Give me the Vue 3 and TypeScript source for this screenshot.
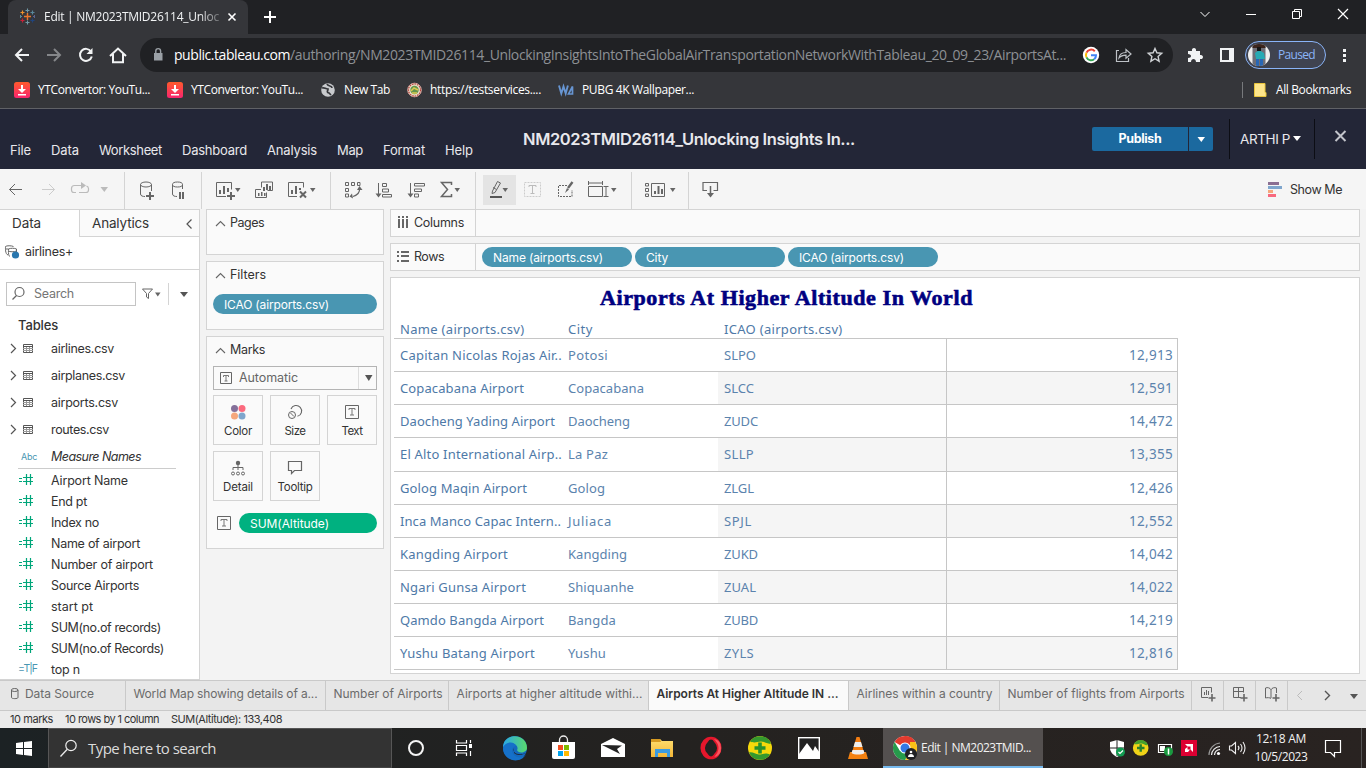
<script setup lang="ts">
import { h, type FunctionalComponent, type ObjectDirective } from 'vue'

/* Spreads a label over a given width by adjusting its letter spacing. */
const vFit: ObjectDirective<HTMLElement, number> = {
  mounted(el, binding) {
    const range = document.createRange()
    range.selectNodeContents(el)
    const natural = range.getBoundingClientRect().width
    const count = (el.textContent ?? '').length
    el.style.letterSpacing = `${(binding.value - natural) / count}px`
  },
}

const caret = (x: number, y: number, c = '#666') => `<path d="M${x + 0.5} ${y}h5.500l-2.750 4z" fill="${c}"/>`
const plus = (x: number, y: number) => `<path d="M${x - 4} ${y}h8M${x} ${y - 4}v8" stroke="#666" stroke-width="2" fill="none"/>`
const ln = (d: string, c = '#666', w = 1) => `<path d="${d}" stroke="${c}" stroke-width="${w}" fill="none"/>`
const fl = (d: string, c = '#666') => `<path d="${d}" fill="${c}"/>`

/* Icon artwork; every icon is drawn in window coordinates. */
const art: Record<string, string> = {
  tableau:
    ln('M27.5 13v7M24 16.5h7', '#e8762d', 1.4) + ln('M27.5 8.500v4M25.500 10.500h4M27.500 20.500v4M25.500 22.500h4', '#7199a6', 1.1) +
    ln('M22.500 10.500v4M20.500 12.500h4', '#eb912c', 1.2) + ln('M32.500 10.500v4M30.500 12.500h4', '#59879b', 1.2) +
    ln('M22.500 18.500v4M20.500 20.500h4', '#c72037', 1.2) + ln('M32.500 18.500v4M30.500 20.500h4', '#1f447e', 1.2) +
    ln('M34.500 15v3M33 16.500h2', '#5b6591', 1) + ln('M20.500 15v3M20 16.500h2', '#5c8a9b', 1),
  tabx: ln('M228.500 13.500l7 7M235.500 13.500l-7 7', '#fff', 1.6),
  newtab: ln('M264 17h12M270 11v12', '#fff', 2),
  wctl:
    ln('M1200.500 12l4.500 4.500 4.500-4.500', '#fff') + ln('M1246 14.500h10', '#fff') + ln('M1292.500 11.500h7v7h-7zM1294.500 11.500v-2h7v7h-2', '#fff') + ln('M1338 9l10 10M1348 9l-10 10', '#fff', 1.200),
  nav:
    ln('M29 55H16M22 49l-6 6 6 6', '#f1f3f4', 2) + ln('M47 55h13M54 49l6 6-6 6', '#85878a', 2) +
    ln('M91 51.500a6 6 0 1 0 .8 5', '#f1f3f4', 2) + fl('M92.500 48v6h-6z', '#f1f3f4') +
    ln('M110 56l8-7.500 8 7.500M113 54v8.200h10V54', '#f1f3f4', 2),
  lock: fl('M154 53h8.500v7.500H154z', '#9aa0a6') + ln('M155.800 53v-2a2.400 2.400 0 0 1 4.800 0v2', '#9aa0a6', 1.4),
  omni:
    '<circle cx="1091" cy="55" r="8.200" fill="#fff"/>' + ln('M1094.800 51.200a5 5 0 0 0-8.300 1.500', '#ea4335', 2) + ln('M1086.500 52.700a5 5 0 0 0 0 4.700', '#fbbc05', 2) + ln('M1086.500 57.400a5 5 0 0 0 7.600 1.800', '#34a853', 2) + ln('M1091 55.200h5a5 5 0 0 1-1.800 4', '#4285f4', 2) +
    ln('M1119 50.500h-2.500v11h12V58M1119 58c.5-4 3.500-5.500 7-5.500v-3l5 4.500-5 4.200v-3c-3 0-5 .3-7 2.800z', '#bdc1c6', 1.200) +
    ln('M1155.000 48.500l1.900 4.300 4.800.5-3.600 3.200 1 4.700-4.100-2.500-4.100 2.500 1-4.700-3.600-3.200 4.800-.5z', '#d0d3d6', 1.400),
  ext:
    fl('M1188 51h4c-1-4 5-4 4 0h4v4c4-1 4 5 0 4v3h-4c0-4-5-4-5 0h-3v-4c4 0 4-4 0-4z', '#f1f3f4') +
    '<rect x="1221" y="49" width="12" height="12" fill="none" stroke="#f1f3f4" stroke-width="2"/>' + fl('M1229 49h4v12h-4z', '#f1f3f4'),
  face:
    '<circle cx="1259" cy="55" r="11" fill="#efefef"/><clipPath id="fc"><circle cx="1259" cy="55" r="11"/></clipPath><g clip-path="url(#fc)"><path d="M1252.500 44h13v22h-13z" fill="#6d6e78"/><path d="M1252.500 44h13v4h-13z" fill="#3b241c"/><path d="M1255 53l4-3 5 3 1 6h-9z" fill="#27aab4"/><path d="M1257 47h4v4h-4z" fill="#151515"/><path d="M1256 59h3v8h-3zM1260 59h3v8h-3z" fill="#2867b5"/></g>',
  dots: fl('M1343 49h3v3h-3zM1343 54h3v3h-3zM1343 59h3v3h-3z', '#f1f3f4'),
  yt:
    '<defs><linearGradient id="yg" x2="0" y2="1"><stop stop-color="#ff5a2c"/><stop offset="1" stop-color="#f9256f"/></linearGradient></defs><rect x="14" y="82" width="16" height="16" rx="2.500" fill="url(#yg)"/>' +
    fl('M21 85h2v4h3l-4 4-4-4h3zM18 94h8v1.500h-8z', '#fff'),
  globe: '<circle cx="328" cy="90" r="6.800" fill="#c8cacd"/>' + ln('M322 88c3-1 3 1 6 1 0 2-2 3 1 4l2 2M327 84c1 3 5 1 5 4', '#35363a', 1.700),
  emblem: '<circle cx="414.500" cy="90" r="6.800" fill="#e9dcc6" stroke="#d8a9a2" stroke-width="1"/><circle cx="414.500" cy="90" r="6" fill="none" stroke="#b6443f" stroke-width="1.200" stroke-dasharray="1.500 1"/><circle cx="414.500" cy="90" r="4.200" fill="#62954c"/>' + ln('M411 91l3-3 4 2M412 93h5', '#dcc951', 1.500),
  wa: ln('M559 85.500l2.300 8 2.200-7 2.200 7 2.200-8', '#6795d2', 1.900) + ln('M568.500 94l4-7.500v7.500z', '#6795d2', 1.700),
  allb: ln('M1242.500 82v16', '#77797c') + '<path d="M1254.500 83.500h10.500v9h1v4h-11.500z" fill="#fde58b" stroke="#e8c43c"/>',
  hcaret: fl('M1197.500 137h7.500l-3.700 5z', '#fff'),
  ucaret: fl('M1293 137h8l-4 5z', '#fff'),
  hx: ln('M1335.500 133l10 10M1345.500 133l-10 10', '#c3c5cb', 2),
  g1:
    ln('M22 189.500H9.500M15 184l-5.500 5.500L15 195') + ln('M42 189.500h12.500M49 184l5.500 5.500L49 195', '#ccc') +
    ln('M76 192.500h-2a2.500 2.500 0 0 1-2.500-2.500v-1.500a3 3 0 0 1 3-3h9M79 192.500h7a2.500 2.500 0 0 0 2.500-2.500v-1.500a3 3 0 0 0-2-2.500', '#bbb', 1.200) + fl('M81 182l5 3.500-5 3.500z', '#bbb') + fl('M100.500 187h7.500l-3.700 5z', '#bbb'),
  g2:
    ln('M140.500 184.500v9.500c0 2 2.500 2.500 4.500 2.500M151.500 184.500v6.500') + '<ellipse cx="146" cy="184.500" rx="5.500" ry="2.500" fill="none" stroke="#666"/>' + plus(150, 196) +
    ln('M172.500 184.500v9.500c0 2 2.500 2.500 4.500 2.500M182.500 184.500v4.500') + '<ellipse cx="177.500" cy="184.500" rx="5" ry="2.500" fill="none" stroke="#666"/>' + fl('M179 192h2v7h-2zM182 192h2v7h-2z'),
  g3:
    ln('M226 196.500h-9.500v-14h15v7') + fl('M219 190h2v4h-2zM223 186h2v8h-2zM227 188h2v4h-2z') + plus(231, 196) + caret(234.500, 188) +
    ln('M261.500 187.500v-5.500h11v8.500h-5M261 189.500h-5.500v8h11v-5') + fl('M263 187h2v4h-2zM266 184h2v6h-2zM269 186h2v4h-2zM258 193h1.500v3H258zM261 192h1.500v4H261zM264 193h1.500v3H264z') +
    ln('M297 196.500h-8.500v-14h15v5') + fl('M291 190h2v4h-2zM295 186h2v8h-2zM299 188h2v2h-2z') + ln('M300 191.500l6 6M306 191.500l-6 6', '#666', 2) + caret(309.500, 188),
  g4:
    ln('M345.500 182.500h3v3h-3zM351.500 182.500h3v3h-3zM357.500 182.500h2.500v3h-2.500zM345.500 188.500h3v3h-3zM345.500 194h3v3h-3z') + ln('M359.500 188c.5 4-2 7-6.500 8.500', '#666', 1.200) + fl('M359.500 186l3 4h-5.500zM352 193.500l1 5-3.500-2z') +
    ln('M378.500 183v12M382.500 183.500h4v3h-4zM382.500 189h6v3h-6zM382.500 194.500h9v2.500h-9z') + fl('M375.500 193.500h6l-3 4z') +
    ln('M410.500 183v12M414.500 183.500h10v2.500h-10zM414.500 189h7v2.500h-7zM414.500 194h4v3h-4z') + fl('M407.500 193.500h6l-3 4z') +
    ln('M451.500 185v-2.500h-10l6 7-6 7h10V194', '#666', 1.500) + caret(454, 188),
  g5:
    '<path d="M483 175h33v30h-33z" fill="#e4e4e4"/>' + ln('M492.500 191l5-9.500 3 1.500-5.500 9.500-3 1zM493 187.500l3.500 2') + ln('M490 197h12', '#555', 2) + caret(502, 188) +
    '<rect x="524.500" y="182.500" width="16" height="14" fill="none" stroke="#ccc" stroke-dasharray="2 1"/>' + ln('M529 187v-1.500h7v1.500M532.500 186v7M530.500 193.500h4', '#bbb') +
    '<path d="M567 185.500h-8.500v11h13.500V190" fill="none" stroke="#666" stroke-dasharray="2 1"/>' + ln('M572.500 182l-4.500 6', '#666', 2.400) + fl('M567 188l2 1.500-4 3.500z') +
    ln('M588.500 181v4M602.500 181v4M588.500 183h14M588.500 186.500h14v10h-14zM603.500 186.500h5M603.500 196.500h5M606 187v9') + caret(610.500, 188),
  g6: ln('M645.500 183.500h3v2.500h-3zM645.500 188.500h3v3h-3zM645.500 194h3v2.500h-3zM651.500 183.500h13v13h-13z') + fl('M654 191h2v3h-2zM657.500 186h2v8h-2zM661 189h2v5h-2z') + caret(669.500, 188),
  g7: ln('M707 190.500h-4v-8h14.500v8h-4', '#666', 1.200) + ln('M710.500 186v8', '#666', 1.500) + fl('M707 193h7l-3.500 4.500z'),
  show: fl('M1268 182h11v3h-11z', '#8b6f92') + fl('M1268 186h14v3h-14z', '#7fa6cd') + fl('M1268 190h5v3h-5z', '#f5a77c') + fl('M1268 194h8v3h-8z', '#f8697e'),
  coll: ln('M191.500 219.500l-4.500 4.500 4.500 4.500', '#555', 1.200),
  ds: ln('M8 255c-3-1-2.500-7-2.500-8.500 1-1 6-1 8 0M9.500 256.500c-1.500-2-1-6-1-7.500 2-1 6-1 8 0v3M8.500 251c1 1 6 1 8 0M5.500 249h3') + '<circle cx="15.500" cy="255" r="3.600" fill="#2a77ae"/>',
  mag: '<circle cx="19.500" cy="292" r="4.500" fill="none" stroke="#666" stroke-width="1.200"/>' + ln('M16.500 295.500l-4 4', '#666', 1.300),
  filt: ln('M142.500 289h10l-4 4.500v5l-2-1.500v-3.500z') + caret(154.500, 292.500) + ln('M168.500 283v22', '#d4d4d4') + fl('M180 292h8l-4 5z', '#555'),
  tbl: ln('M11 344l4.500 4.500-4.500 4.500', '#555', 1.200) + ln('M23.500 344.500h9v8h-9zM23 346.500h10', '#555') + ln('M23 348.500h10M23 350.500h10M26.500 347v5M29.500 347v5', '#999', 1),
  hash: ln('M19 478.500h3M19 481.500h3M23 477.500h10M23 481.500h10M26.500 474v11M30.500 474v11', '#00a67a', 1.200),
  pgs: ln('M216 225l4.500-4.500 4.500 4.500', '#666', 1.100),
  tic: ln('M220.500 372.500h11v11h-11z', '#666') + ln('M223.500 377v-1.500h5v1.500M226 376v5M224.500 381h3', '#777'),
  dd: ln('M358.500 367v22', '#ddd') + fl('M365 375h7.500l-3.700 6z', '#555'),
  color: '<circle cx="234.500" cy="408.500" r="3.500" fill="#84709a"/><circle cx="242" cy="408.500" r="3.500" fill="#fb6a7e"/><circle cx="234.500" cy="416" r="3.500" fill="#f5a77c"/><circle cx="242" cy="416" r="3.500" fill="#7fa6cd"/>',
  size: ln('M291 409a5.500 5.500 0 1 1 6.500 7.300', '#666', 1.100) + '<circle cx="292" cy="415" r="3.500" fill="#fafafa" stroke="#666"/>' + ln('M290.500 413l3.500 3.500'),
  text: ln('M345.500 405.500h13v13h-13z') + ln('M349 410v-1.500h6v1.500M352 409v6M350 415h4', '#777'),
  detail: '<circle cx="238" cy="463" r="2.200" fill="#666"/>' + ln('M238 465v5M233 470v-2.500h10v2.500') + '<circle cx="233" cy="473.500" r="1.500" fill="none" stroke="#666"/><circle cx="238" cy="473.500" r="1.500" fill="none" stroke="#666"/><circle cx="243" cy="473.500" r="1.500" fill="none" stroke="#666"/>',
  tip: ln('M288.500 461.500h13v9h-7l-3 3v-3h-3z', '#666', 1.200),
  tsum: ln('M217.500 516.500h13v13h-13z') + ln('M221 521v-1.500h6v1.500M224 520v6M222 526h4', '#777'),
  cols: fl('M398 216h2v2h-2zM402 216h2v2h-2zM406 216h2v2h-2zM398 219h2v9h-2zM402 219h2v9h-2zM406 219h2v9h-2z'),
  rows: fl('M397 251h2v2h-2zM397 255h2v2h-2zM397 260h2v2h-2zM401 251h8v2h-8zM401 255h8v2h-8zM401 260h8v2h-8z'),
  dsrc: ln('M11.500 691v7.500c0 1.500 6.500 1.500 6.500 0V691') + '<ellipse cx="14.700" cy="691" rx="3.300" ry="1.500" fill="none" stroke="#666"/>',
  ns: ln('M1208 697.500h-6.500v-10h10v5') + fl('M1204 692h1v3h-1zM1206 690h1v5h-1zM1208 691h1v4h-1z') + ln('M1208.500 698h7M1212 694v7.500', '#666', 1.600),
  nd: ln('M1241 697.500h-7.500v-10h10v5M1238.500 687v10M1233 691.500h10') + ln('M1240.500 698h7M1244 694v7.500', '#666', 1.600),
  nst: ln('M1271 698.500c-1-1-4-1-5.500-.5v-10c2-1 4.500 0 5.500 1.500 1-1.500 3.500-2.500 5.500-1.500v5M1271 689v9') + ln('M1272.500 698h7M1276 694v7.500', '#666', 1.600),
  pag: ln('M1302 691l-4.500 4.500 4.500 4.500', '#bbb') + ln('M1325 691l4.500 4.500-4.500 4.500', '#555', 1.400) + fl('M1350 694h8l-4 5z', '#555'),
  win: fl('M16 743l7-1v6h-7zM24 742l8-1v7h-8zM16 749h7v6l-7-1zM24 749h8v7l-8-1z', '#fff'),
  wmag: '<circle cx="71" cy="745.500" r="5.200" fill="none" stroke="#eee" stroke-width="1.200"/>' + ln('M67 749.500l-6.500 7', '#eee', 1.300),
  apps:
    '<circle cx="416" cy="748" r="7" fill="none" stroke="#f4f4f4" stroke-width="2"/>' +
    ln('M456.500 740v3h10v-3M456.500 756v-3h10v3M456.500 745.500h10v5h-10zM470.500 740v3M470.500 751v5', '#fff', 1.200) + fl('M469 744h3v4h-3z', '#fff') +
    '<defs><linearGradient id="eg"><stop stop-color="#2aa8e8"/><stop offset="1" stop-color="#59d96b"/></linearGradient><linearGradient id="cg" x2="0" y2="1"><stop stop-color="#ffdf70"/><stop offset="1" stop-color="#f3b637"/></linearGradient></defs>' +
    '<circle cx="515" cy="748" r="12" fill="#1469be"/><path d="M503 747c1-15 24-14 24 1 0 5-9 6-10 2 3-5-7-10-14-3z" fill="url(#eg)"/><path d="M503 748c2-7 12-7 13-2-6 1-5 9 1 11 4 1 7 0 9-3-4 8-13 7-16 5-4-2-7-6-7-11z" fill="#1671c9"/><path d="M514 748c-2 5 4 8 12 5-3 2-9 3-12 0z" fill="#21252a"/>' +
    fl('M552 742h23v15a2 2 0 0 1-2 2h-19a2 2 0 0 1-2-2z', '#fff') + ln('M559.500 742v-2a4 4 0 0 1 8 0v2', '#eee', 1.300) +
    fl('M558 745h5v5h-5z', '#f25022') + fl('M564 745h5v5h-5z', '#7fba00') + fl('M558 751h5v5h-5z', '#00a4ef') + fl('M564 751h5v5h-5z', '#ffb900') +
    fl('M601 744l12-6 12 6v13h-24z', '#fff') + fl('M602 745l20 .5-5 3.500 3 5-8-4z', '#242424') +
    fl('M651 739h9l2 2h11v16h-22z', 'url(#cg)') + fl('M651 739h9l1 3h-10z', '#d79b22') + fl('M655 749h15v8h-3v-4h-9v4h-3z', '#3b9be0') +
    '<ellipse cx="711" cy="748" rx="8.300" ry="9" fill="none" stroke="#e5172c" stroke-width="4.500"/><ellipse cx="711" cy="748" rx="4.500" ry="8.500" fill="#222"/><path d="M714 739q9 9 0 18 7-1 7-9t-7-9z" fill="#fa5660"/>' +
    '<circle cx="760" cy="748" r="12" fill="#f6d90b"/><path d="M750 741.500a12 12 0 0 1 21 2c-4 1-6-2-10-2s-6 2-11 0zM770 754.500a12 12 0 0 1-21-2c4-1 6 2 10 2s6-2 11 0z" fill="#35992e"/>' + ln('M754.500 748h11M760 742.500v11', '#27912d', 3.600) +
    '<rect x="798.700" y="737.700" width="20.600" height="20.600" fill="#222" stroke="#fff" stroke-width="1.400"/>' + fl('M799 754l8-11 6 8 2-5 5 7v6h-21z', '#fff') +
    fl('M850 752h16l2 7h-20z', '#f28111') + fl('M856.500 737h3l5 17c-3 2-10 2-13 0z', '#f47e12') + fl('M855 742h6l1.500 5h-9zM852.500 750h11l1 3c-3 2-10 2-13 0z', '#eee'),
  chrome:
    '<circle cx="905" cy="748" r="12" fill="#fff"/>' + fl('M905 748L894.600 742A12 12 0 0 1 915.400 742z', '#e33b2e') + fl('M905 736a12 12 0 0 1 10.400 6H905z', '#e33b2e') + fl('M915.400 742A12 12 0 0 1 905 760l5-9v-9z', '#fbc116') + fl('M894.600 742A12 12 0 0 0 905 760l5-9-10 0z', '#269b4b') +
    '<circle cx="905" cy="748" r="5.600" fill="#fff"/><circle cx="905" cy="748" r="4.500" fill="#3578e5"/><circle cx="911" cy="754" r="6" fill="#202124"/>' + fl('M908 757c0-4 6-4 6 0z', '#fff') + '<circle cx="911" cy="752" r="1.300" fill="#fff"/>',
  tray:
    fl('M1110 742l7-2 7 2v6c0 4-3 7-7 9-4-2-7-5-7-9z', '#fff') + ln('M1117 740v16M1110 748h14', '#222') + '<circle cx="1120.500" cy="752" r="4.500" fill="#119b50"/>' + ln('M1118.500 752l1.500 1.500 3-3', '#fff', 1.200) +
    '<circle cx="1140.700" cy="748" r="7.800" fill="#f0d318"/><path d="M1134 744a7.800 7.800 0 0 1 14 1c-3 1-4-1.500-7-1.500s-4 1.500-7 .5z" fill="#45a02d"/>' + ln('M1137 748h7.500M1140.700 744.300v7.500', '#27812d', 2.400) +
    ln('M1158.500 744.500h13v8h-13z', '#fff', 1.200) + fl('M1160 746h5v5h-5z', '#fff') + '<circle cx="1168.500" cy="751.500" r="4.500" fill="#19993f"/>' + ln('M1168.500 748.500v6', '#fff', 1.500) +
    fl('M1181 740h16v16h-16z', '#dc0032') + fl('M1185 744h8v8l-2.500-2.500v-3h-3zM1185 749l2.500-2v2.500h2.500l-2 2.500h-3z', '#fff') +
    ln('M1209 755a12 12 0 0 1 11-12', '#999', 1.200) + ln('M1211.500 755a9 9 0 0 1 8.500-8.500M1214.500 755a6 6 0 0 1 5.500-5.500', '#eee', 1.200) + '<circle cx="1218.500" cy="753.500" r="1.600" fill="#fff"/>' +
    ln('M1229.500 746v4h2l4 3.500v-11l-4 3.500zM1238 746q2 2 0 4M1240.500 744q3 4 0 8M1243 742q4 6 0 12', '#eee', 1.100),
  note: ln('M1325.500 740.500h15v12h-6v4l-4-4h-5z', '#fff', 1.200) + ln('M1361.500 728v40', '#555'),
}

const Ico: FunctionalComponent<{ n: string; b: string }> = (p) => {
  const [, , w, hh] = p.b.split(' ')
  return h('svg', { width: w, height: hh, viewBox: p.b, innerHTML: art[p.n] })
}
Ico.props = ['n', 'b']

const menus: [string, number][] = [['File', 21], ['Data', 28], ['Worksheet', 63], ['Dashboard', 65], ['Analysis', 50], ['Map', 26], ['Format', 42], ['Help', 28]]
const tables: [string, number][] = [['airlines.csv', 63], ['airplanes.csv', 74], ['airports.csv', 67], ['routes.csv', 58]]
const fields: [string, number][] = [['Airport Name', 77], ['End pt', 36], ['Index no', 48], ['Name of airport', 89], ['Number of airport', 102], ['Source Airports', 88], ['start pt', 42], ['SUM(no.of records)', 110], ['SUM(no.of Records)', 113]]
const marks: [string, string, string, number][] = [
  ['Color', 'color', '214 402 48 20', 28],
  ['Size', 'size', '271 402 48 20', 21],
  ['Text', 'text', '328 402 48 20', 21],
  ['Detail', 'detail', '214 458 48 20', 30],
  ['Tooltip', 'tip', '271 458 48 20', 35],
]
const rows: [string, number, string, number, string, number, string][] = [
  ['Capitan Nicolas Rojas Air..', 162, 'Potosi', 40, 'SLPO', 32, '12,913'],
  ['Copacabana Airport', 124, 'Copacabana', 76, 'SLCC', 30, '12,591'],
  ['Daocheng Yading Airport', 155, 'Daocheng', 62, 'ZUDC', 34, '14,472'],
  ['El Alto International Airp..', 162, 'La Paz', 40, 'SLLP', 30, '13,355'],
  ['Golog Maqin Airport', 127, 'Golog', 37, 'ZLGL', 30, '12,426'],
  ['Inca Manco Capac Intern..', 161, 'Juliaca', 44, 'SPJL', 28, '12,552'],
  ['Kangding Airport', 108, 'Kangding', 59, 'ZUKD', 34, '14,042'],
  ['Ngari Gunsa Airport', 126, 'Shiquanhe', 66, 'ZUAL', 32, '14,022'],
  ['Qamdo Bangda Airport', 144, 'Bangda', 48, 'ZUBD', 34, '14,219'],
  ['Yushu Batang Airport', 135, 'Yushu', 38, 'ZYLS', 30, '12,816'],
]
const sheets: [string, number, number][] = [
  ['World Map showing details of a...', 200, 184],
  ['Number of Airports', 123, 109],
  ['Airports at higher altitude withi...', 200, 186],
  ['Airports At Higher Altitude IN ...', 200, 182],
  ['Airlines within a country', 151, 136],
  ['Number of flights from Airports', 192, 177],
]
</script>

<template>
  <div class="screen">
    <div class="tabstrip">
      <div class="tab">
        <Ico n="tableau" b="8 0 36 34" />
        <span class="tabtitle"><span v-fit="175" class="t">Edit | NM2023TMID26114_Unloc</span></span>
        <Ico n="tabx" b="220 0 28 34" />
      </div>
      <Ico n="newtab" b="248 0 40 34" />
      <Ico class="end" n="wctl" b="1190 0 176 34" />
    </div>

    <div class="addressbar">
      <Ico n="nav" b="0 38 140 34" />
      <div class="omnibox">
        <Ico n="lock" b="140 38 34 34" />
        <span v-fit="116" class="t host">public.tableau.com</span>
        <span v-fit="776" class="t path">/authoring/NM2023TMID26114_UnlockingInsightsIntoTheGlobalAirTransportationNetworkWithTableau_20_09_23/AirportsAt...</span>
        <Ico n="omni" b="1073 38 100 34" class="end" />
      </div>
      <Ico n="ext" b="1173 38 72 34" />
      <div class="profile">
        <Ico n="face" b="1246 42 32 26" />
        <span v-fit="37" class="t">Paused</span>
      </div>
      <Ico n="dots" b="1326 38 40 34" />
    </div>

    <div class="bookmarks">
      <Ico n="yt" b="0 72 38 36" /><span v-fit="112" class="t">YTConvertor: YouTu...</span>
      <Ico n="yt" b="-3 72 41 36" /><span v-fit="112" class="t">YTConvertor: YouTu...</span>
      <Ico n="globe" b="303 72 41 36" /><span v-fit="46" class="t">New Tab</span>
      <Ico n="emblem" b="390 72 40 36" /><span v-fit="111" class="t">https://testservices....</span>
      <Ico n="wa" b="541 72 41 36" /><span v-fit="112" class="t">PUBG 4K Wallpaper...</span>
      <Ico class="end" n="allb" b="1236 72 40 36" /><span v-fit="75" class="t allbk">All Bookmarks</span>
    </div>

    <header class="apphead">
      <nav class="menu">
        <span v-for="[label, w] in menus" :key="label" v-fit="w" class="t">{{ label }}</span>
      </nav>
      <h1 v-fit="332" class="t booktitle">NM2023TMID26114_Unlocking Insights In...</h1>
      <div class="account">
        <div class="publish"><b><span v-fit="43" class="t">Publish</span></b><Ico n="hcaret" b="1189 127 24 24" /></div>
        <div class="user"><span v-fit="50" class="t">ARTHI P</span><Ico n="ucaret" b="1290 120 24 40" /></div>
        <Ico n="hx" b="1315 121 51 40" />
      </div>
    </header>

    <div class="toolbar">
      <div class="grp"><Ico n="g1" b="0 169 124 40" /></div>
      <div class="grp"><Ico n="g2" b="125 169 76 40" /></div>
      <div class="grp"><Ico n="g3" b="202 169 128 40" /></div>
      <div class="grp"><Ico n="g4" b="331 169 144 40" /></div>
      <div class="grp"><Ico n="g5" b="476 169 155 40" /></div>
      <div class="grp"><Ico n="g6" b="632 169 56 40" /></div>
      <Ico n="g7" b="689 169 40 40" />
      <Ico class="end" n="show" b="1260 169 30 40" />
      <span v-fit="52" class="t showme">Show Me</span>
    </div>

    <main class="work">
      <aside class="datapane">
        <div class="ptabs">
          <div class="on"><span v-fit="29" class="t">Data</span></div>
          <div class="off"><span v-fit="57" class="t">Analytics</span><Ico n="coll" b="180 210 19 27" /></div>
        </div>
        <div class="source"><Ico n="ds" b="0 237 25 32" /><span v-fit="48" class="t">airlines+</span></div>
        <div class="find">
          <div class="searchbox"><Ico n="mag" b="7 283 27 22" /><span v-fit="40" class="t">Search</span></div>
          <Ico n="filt" b="136 282 60 24" />
        </div>
        <div class="tname"><span v-fit="40" class="t">Tables</span></div>
        <div v-for="[label, w] in tables" :key="label" class="trow"><Ico n="tbl" b="0 335 51 27" /><span v-fit="w" class="t">{{ label }}</span></div>
        <div class="mnames"><span class="abc"><span v-fit="16" class="t">Abc</span></span><i v-fit="90" class="t">Measure Names</i></div>
        <div v-for="[label, w] in fields" :key="label" class="frow"><Ico n="hash" b="0 469 51 21" /><span v-fit="w" class="t">{{ label }}</span></div>
        <div class="frow"><span class="tf">=T|F</span><span v-fit="29" class="t">top n</span></div>
      </aside>

      <div class="cards">
        <section class="card pages"><div class="chead"><Ico n="pgs" b="207 210 23 25" /><span v-fit="34" class="t">Pages</span></div></section>
        <section class="card filters">
          <div class="chead"><Ico n="pgs" b="207 210 23 25" /><span v-fit="36" class="t">Filters</span></div>
          <div class="pill"><span v-fit="105" class="t">ICAO (airports.csv)</span></div>
        </section>
        <section class="card marks">
          <div class="chead"><Ico n="pgs" b="207 210 23 25" /><span v-fit="35" class="t">Marks</span></div>
          <div class="select"><Ico n="tic" b="214 367 25 22" /><span v-fit="59" class="t">Automatic</span><Ico class="end" n="dd" b="356 367 20 22" /></div>
          <div class="mgrid">
            <div v-for="[label, ic, box, w] in marks" :key="label" class="mbtn"><Ico :n="ic" :b="box" /><span v-fit="w" class="t">{{ label }}</span></div>
          </div>
          <div class="sum"><Ico n="tsum" b="213 513 26 20" /><div class="pill green"><span v-fit="79" class="t">SUM(Altitude)</span></div></div>
        </section>
      </div>

      <div class="canvas">
        <div class="shelf"><div class="slabel"><Ico n="cols" b="391 210 23 26" /><span v-fit="50" class="t">Columns</span></div></div>
        <div class="shelf">
          <div class="slabel"><Ico n="rows" b="391 244 23 26" /><span v-fit="30" class="t">Rows</span></div>
          <div class="pills">
            <div class="pill"><span v-fit="110" class="t">Name (airports.csv)</span></div>
            <div class="pill"><span v-fit="22" class="t">City</span></div>
            <div class="pill"><span v-fit="105" class="t">ICAO (airports.csv)</span></div>
          </div>
        </div>
        <div class="sheet">
          <h2><span v-fit="373" class="t">Airports At Higher Altitude In World</span></h2>
          <div class="viz">
            <div class="vrow vhead">
              <div><span v-fit="124.5" class="t">Name (airports.csv)</span></div>
              <div><span v-fit="25" class="t">City</span></div>
              <div><span v-fit="118.5" class="t">ICAO (airports.csv)</span></div>
            </div>
            <div v-for="r in rows" :key="r[4]" class="vrow">
              <div class="nm"><span v-fit="r[1]" class="t">{{ r[0] }}</span></div>
              <div><span v-fit="r[3]" class="t">{{ r[2] }}</span></div>
              <div class="band icao"><span v-fit="r[5]" class="t">{{ r[4] }}</span></div>
              <div class="band val"><span v-fit="44" class="t">{{ r[6] }}</span></div>
            </div>
          </div>
        </div>
      </div>
    </main>

    <div class="sheets">
      <div class="stab src"><Ico n="dsrc" b="0 681 25 29" /><span v-fit="69" class="t">Data Source</span></div>
      <div v-for="([label, w, tw], i) in sheets" :key="label" class="stab" :class="{ active: i === 3 }" :style="{ width: w + 'px' }"><span v-fit="tw" class="t">{{ label }}</span></div>
      <div class="sbtn"><Ico n="ns" b="1192 681 31 29" /></div>
      <div class="sbtn"><Ico n="nd" b="1224 681 31 29" /></div>
      <div class="sbtn"><Ico n="nst" b="1256 681 31 29" /></div>
      <Ico n="pag" b="1288 681 78 29" />
    </div>
    <div class="status">
      <span v-fit="43" class="t">10 marks</span><span v-fit="94" class="t">10 rows by 1 column</span><span v-fit="111" class="t">SUM(Altitude): 133,408</span>
    </div>

    <footer class="taskbar">
      <Ico n="win" b="0 728 48 40" />
      <div class="wsearch"><Ico n="wmag" b="49 729 39 38" /><span v-fit="128" class="t">Type here to search</span></div>
      <Ico n="apps" b="392 728 491 40" />
      <div class="running"><Ico n="chrome" b="883 728 38 40" /><span v-fit="110" class="t">Edit | NM2023TMID...</span></div>
      <Ico class="end" n="tray" b="1100 728 150 40" />
      <div class="clock"><span v-fit="50" class="t">12:18 AM</span><span v-fit="53" class="t">10/5/2023</span></div>
      <Ico n="note" b="1312 728 54 40" />
    </footer>
  </div>
</template>

<style>
body { overflow: hidden; }
</style>

<style scoped>
* { box-sizing: border-box; margin: 0; }
.screen { width: 1366px; height: 768px; overflow: hidden; display: flex; flex-direction: column; font: 12.5px/16px Inter, "Liberation Sans", sans-serif; color: #333; background: #f3f3f3; }
.screen > * { flex: none; }
svg { display: block; flex: none; }
.t { display: inline-block; white-space: pre; flex: none; }
.end { margin-left: auto; }

.tabstrip, .addressbar, .bookmarks { display: flex; align-items: center; font-family: "Open Sans", "Noto Sans", sans-serif; font-size: 12px; color: #f1f3f4; }
.tabstrip { height: 34px; background: #202124; }
.tab { display: flex; align-items: center; width: 240px; height: 34px; margin-left: 8px; background: #35363a; border-radius: 8px 8px 0 0; }
.tabtitle { width: 176px; -webkit-mask-image: linear-gradient(90deg, #000 88%, rgba(0, 0, 0, 0.25) 100%); mask-image: linear-gradient(90deg, #000 88%, rgba(0, 0, 0, 0.25) 100%); }
.addressbar { height: 38px; background: #35363a; padding: 4px 0 0; }
.omnibox { display: flex; align-items: center; width: 1033px; height: 34px; border-radius: 17px; background: #202124; font-size: 14px; }
.host { color: #fff; }
.path { color: #8d9094; }
.profile { display: flex; align-items: center; width: 81px; height: 28px; border: 1px solid #8ab4f8; border-radius: 14px; background: #3f4350; color: #8ab4f8; }
.bookmarks { height: 37px; background: #35363a; border-bottom: 1px solid #606166; color: #fff; }
.allbk { margin-right: 15px; }

.apphead { display: flex; height: 60px; background: #232637; color: #e8e8ec; }
.menu { display: flex; gap: 20px; padding: 33px 0 0 10px; font-size: 13px; }
.booktitle { margin: 19px 0 0 50px; font-size: 16.500px; line-height: 22px; font-weight: 600; }
.account { display: flex; margin-left: auto; padding-top: 10px; height: 50px; align-items: center; }
.publish { display: flex; height: 24px; border-radius: 2px; background: #1b699f; color: #fff; margin-right: 16px; overflow: hidden; }
.publish b { width: 97px; border-right: 1px solid #232637; text-align: center; line-height: 24px; font-size: 12.500px; }
.user { display: flex; align-items: center; height: 40px; border: solid #0c0d14; border-width: 0 1px; padding-left: 10px; font-size: 13.500px; }

.toolbar { display: flex; align-items: center; height: 40px; background: #f5f5f5; }
.grp { display: flex; height: 40px; padding-right: 1px; background: linear-gradient(#d4d4d4, #d4d4d4) right 3px / 1px 37px no-repeat; background-position: right 3px; }
.showme { margin-right: 24px; padding-top: 2px; }

.work { display: flex; height: 471px; background: #f3f3f3; }
.datapane { width: 200px; height: 471px; background: #fff; border: solid #d4d4d4; border-width: 1px 1px 1px 0; overflow: hidden; }
.ptabs { display: flex; height: 27px; font-size: 13.500px; line-height: 27px; }
.on { width: 79px; padding-left: 12px; }
.off { display: flex; justify-content: space-between; width: 120px; padding-left: 12px; background: #fafafa; border: solid #d4d4d4; border-width: 0 0 1px 1px; }
.source { display: flex; align-items: center; height: 33px; padding-bottom: 1px; border-bottom: 1px solid #d4d4d4; }
.source .t { margin-bottom: 1px; }
.find { display: flex; height: 24px; margin: 12px 0 0 6px; }
.searchbox { display: flex; align-items: center; width: 130px; height: 24px; border: 1px solid #c4c4c4; color: #757575; }
.tname { padding-left: 18px; margin-top: 11px; height: 18px; font-size: 13px; font-weight: 500; }
.trow { display: flex; align-items: center; height: 27px; }
.mnames { display: flex; align-items: center; height: 26px; margin: 0 23px 0 18px; padding-top: 2px; border-bottom: 1px solid #ccc; }
.abc { width: 33px; padding-left: 3px; color: #4996b2; font-size: 9px; }
.frow { display: flex; align-items: center; height: 21px; }
.frow .t { padding-top: 2px; }
.tf { width: 51px; padding-left: 18px; color: #4996b2; font-size: 10.500px; letter-spacing: -1px; }

.cards { width: 178px; margin-left: 6px; display: flex; flex-direction: column; gap: 6px; }
.card { border: 1px solid #d4d4d4; background: #fafafa; }
.pages { height: 46px; }
.filters { height: 69px; }
.marks { height: 213px; }
.chead { display: flex; align-items: center; height: 27px; padding-bottom: 1px; }
.pill { display: flex; align-items: center; height: 20px; padding: 1px 0 0 11px; border-radius: 10px; background: #4996b2; color: #fff; font-size: 12px; }
.filters .pill { margin: 5px 6px 0; }
.select { display: flex; align-items: center; height: 24px; margin: 2px 6px 0; border: 1px solid #b4b4b4; color: #666; }
.mgrid { display: grid; grid-template-columns: repeat(3, 50px); gap: 6px 7px; margin: 5px 6px 0; }
.mbtn { height: 50px; border: 1px solid #d4d4d4; padding-top: 6px; display: flex; flex-direction: column; align-items: center; font-size: 11.500px; }
.mbtn .t { line-height: 18px; }
.sum { display: flex; margin: 12px 6px 0; }
.green { width: 138px; background: #00b180; }

.canvas { width: 970px; margin-left: 6px; display: flex; flex-direction: column; gap: 6px; }
.shelf { display: flex; height: 28px; border: 1px solid #d4d4d4; background: #fafafa; }
.slabel { display: flex; align-items: center; width: 85px; border-right: 1px solid #d4d4d4; }
.pills { display: flex; gap: 3px; padding: 3px 0 0 6px; }
.pills .pill { width: 150px; }
.sheet { height: 397px; border: 1px solid #d4d4d4; background: #fff; }
h2 { margin: 7px 0 0 209px; height: 26px; font: bold 22px/26px "Liberation Serif", serif; color: #000080; -webkit-text-stroke: .6px #000080; }
.viz { width: 784px; margin: 9px 0 0 3px; font: 13px/17px "Noto Sans", sans-serif; color: #5b83ad; }
.vrow { display: grid; grid-template-columns: 168px 156px 229px 231px; height: 33px; border-bottom: 1px solid #c6c6c6; }
.vrow:nth-child(5) { height: 34px; padding-bottom: 1px; }
.vrow > div { padding-left: 6px; display: flex; align-items: center; }
.vrow.vhead { height: 19px; }
.vrow .nm, .vhead { color: #4e79a7; }
.vrow > .icao { border-right: 1px solid #c6c6c6; }
.vrow > .val { justify-content: flex-end; padding: 0 4px 0 0; border-right: 1px solid #c6c6c6; font-size: 13.500px; }
.vrow:nth-child(5) > .band { margin-bottom: -1px; padding-bottom: 1px; }
.vrow:nth-child(odd):not(.vhead) .band { background: #f5f5f5; }

.sheets { display: flex; height: 31px; background: #e6e6e6; border: solid #c9c9c9; border-width: 1px 0; color: #6b6b6b; }
.stab { display: flex; align-items: center; padding: 0 0 3px 7.500px; border-right: 1px solid #c9c9c9; font-size: 12px; }
.stab.src { width: 126px; padding-left: 0; }
.stab.active { background: #fafafa; color: #333; font-weight: 600; }
.sbtn { border-right: 1px solid #c9c9c9; }
.status { display: flex; align-items: center; gap: 12px; height: 17px; padding: 0 0 1px 10px; background: #ebebeb; font-size: 11px; }
.taskbar { display: flex; align-items: center; height: 40px; background: linear-gradient(90deg, #1c2224, #242220 50%, #292321); color: #f2f2f2; font-family: "Open Sans", "Noto Sans", sans-serif; font-size: 12px; }
.wsearch { display: flex; align-items: center; width: 344px; height: 40px; background: #333; border: 1px solid #565656; border-bottom-color: #444; font-size: 15px; color: #dcdcdc; }
.running { display: flex; align-items: center; width: 160px; height: 40px; background: linear-gradient(#54504f, #54504f) 0 0 / 100% 38px no-repeat #76b9ed; }
.clock { display: flex; flex-direction: column; align-items: center; width: 62px; line-height: 18px; }
</style>
